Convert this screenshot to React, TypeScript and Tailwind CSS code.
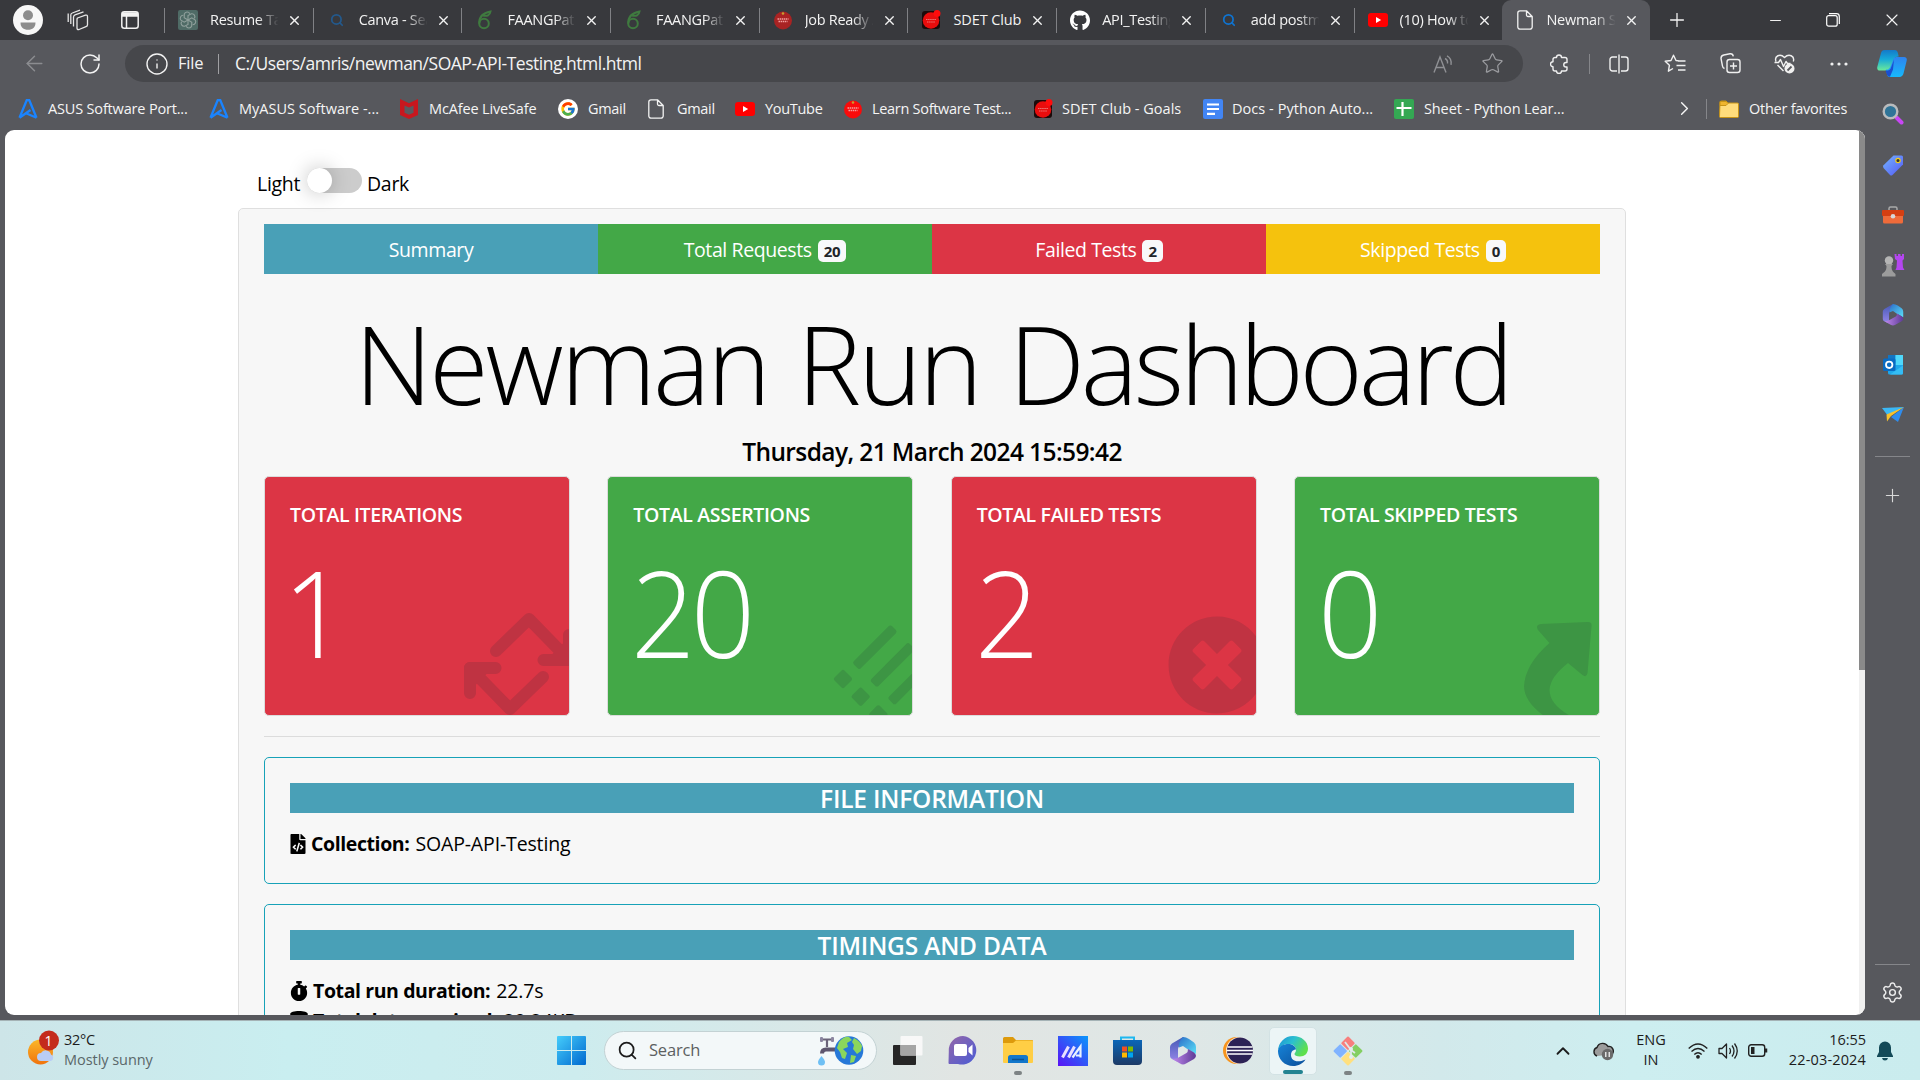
import React from "react";
import {
  FaFileCode, FaStopwatch, FaDatabase, FaGithub, FaTimesCircle,
} from "react-icons/fa";
import { FcGoogle } from "react-icons/fc";
import { Search, Star, X, Plus, Minus, ChevronRight, ChevronUp, Settings, Info, RotateCw, ArrowLeft } from "lucide-react";

type Kind = string;

function Glyph({ kind }: { kind: Kind }) {
  switch (kind) {
    case "gpt":
      return (
        <svg viewBox="0 0 20 20" className="h-5 w-5">
          <rect width="20" height="20" rx="2" fill="#4f6b66" />
          <g fill="none" stroke="#90a09c" strokeWidth="1.1">
            {[0, 60, 120, 180, 240, 300].map((a) => (
              <path key={a} transform={`rotate(${a} 10 10)`} d="M10 10V5.6L13.4 3.8a3 3 0 0 1 3 4.6" />
            ))}
          </g>
        </svg>
      );
    case "search-dim":
      return <Search className="h-[14px] w-[14px] text-[#23598c]" strokeWidth={3} />;
    case "search":
      return <Search className="h-[14px] w-[14px] text-[#0f74d1]" strokeWidth={3} />;
    case "leaf":
      return (
        <svg viewBox="0 0 20 20" className="h-5 w-5" fill="none" stroke="#3f7a3f" strokeWidth="2">
          <circle cx="9" cy="13.500" r="4.800" />
          <path d="M4.300 13.500C4 8 7 3 15.500 1.500 15 5.500 12 6.500 8 5.500" />
        </svg>
      );
    case "job":
    case "learn":
      return (
        <svg viewBox="0 0 20 20" className="h-5 w-5">
          <circle cx="10" cy="10.500" r="9" fill={kind === "job" ? "#a92323" : "#f90b0b"} />
          <circle cx="10" cy="3.500" r="1.300" fill="#c7a030" />
          <path d="M4.500 9h11M5.500 11.500h9" stroke="#f4a0a0" strokeWidth="1.300" strokeDasharray="1.500 .6" />
        </svg>
      );
    case "sdet":
      return (
        <svg viewBox="0 0 20 20" className="h-5 w-5">
          <rect x="1" y="1" width="18" height="18" rx="3" fill="#1b0b0b" />
          <circle cx="10" cy="10.500" r="8.300" fill="#e80d0d" />
          <circle cx="16" cy="3.500" r="3.500" fill="#ff0c0c" />
          <path d="M5 9.500h10M6 12h8" stroke="#ec7676" strokeWidth="1.100" strokeDasharray="1.500 .6" />
        </svg>
      );
    case "github":
      return <FaGithub className="h-[21px] w-[21px] text-white" />;
    case "yt":
      return (
        <svg viewBox="0 0 20 14" className="h-[14px] w-5">
          <rect width="20" height="14" rx="3" fill="#f00" />
          <path d="M8 4v6l5.200-3z" fill="#fff" />
        </svg>
      );
    case "file":
      return (
        <svg viewBox="0 0 16 20" className="h-5 w-4" fill="none" stroke="#f2f2f2" strokeWidth="1.300" strokeLinejoin="round">
          <path d="M3 .8h6.500L15.200 6.500V17a2.200 2.200 0 0 1-2.200 2.200H3A2.200 2.200 0 0 1 .8 17V3A2.200 2.200 0 0 1 3 .8zM9.500.8V5A1.500 1.500 0 0 0 11 6.500h4.200" />
        </svg>
      );
    case "asus":
      return (
        <svg viewBox="0 0 20 20" className="h-5 w-5" fill="none" stroke="#1a84ff" strokeWidth="2.300" strokeLinejoin="round">
          <path d="M1.500 18.800L8.800 1h2.400l7.300 17.800M1.500 18.800L12.500 11M18.500 18.800L8 14.300" />
        </svg>
      );
    case "mcafee":
      return (
        <svg viewBox="0 0 18 20" className="h-5 w-[18px]">
          <path d="M0 0l9 4.300L18 0v16l-9 4-9-4z" fill="#c8171e" />
          <path d="M4.500 6.500L9 8.500l4.500-2v7.200L9 15.700l-4.500-2z" fill="#5a5b60" />
        </svg>
      );
    case "google":
      return (
        <span className="flex h-5 w-5 items-center justify-center rounded-full bg-white">
          <FcGoogle className="h-4 w-4" />
        </span>
      );
    case "docs":
      return (
        <svg viewBox="0 0 20 20" className="h-5 w-5">
          <rect width="20" height="20" rx="2" fill="#4285f4" />
          <path d="M4 5.500h12M4 10h12M4 14.800h8" stroke="#fff" strokeWidth="2.200" />
        </svg>
      );
    case "sheet":
      return (
        <svg viewBox="0 0 20 20" className="h-5 w-5">
          <rect width="20" height="20" rx="2" fill="#34a853" />
          <path d="M2.500 9h15M8.500 3v14" stroke="#fff" strokeWidth="2.200" />
        </svg>
      );
    default:
      return (
        <svg viewBox="0 0 20 18" className="h-[18px] w-5">
          <path d="M1 2.500A1.500 1.500 0 0 1 2.500 1H7l2 2h9.500A1 1 0 0 1 19.500 4v12.500a1 1 0 0 1-1 1h-17a1 1 0 0 1-1-1z" fill="#ffdc7c" stroke="#c89416" />
          <path d="M1 1.500h6.300l1.700 2-2 2H1z" fill="#f0b52e" stroke="#c89416" />
        </svg>
      );
  }
}

const tabs: { icon: Kind; title: string }[] = [
  { icon: "gpt", title: "Resume Tailor" },
  { icon: "search-dim", title: "Canva - Search" },
  { icon: "leaf", title: "FAANGPath" },
  { icon: "leaf", title: "FAANGPath" },
  { icon: "job", title: "Job Ready A" },
  { icon: "sdet", title: "SDET Club" },
  { icon: "github", title: "API_Testing" },
  { icon: "search", title: "add postman" },
  { icon: "yt", title: "(10) How to" },
];

function TabBody({ icon, title }: { icon: Kind; title: string }) {
  return (
    <>
      <span className="flex w-5 justify-center"><Glyph kind={icon} /></span>
      <span className={title === "SDET Club" ? "ml-3 w-[70px] whitespace-nowrap tracking-[-0.100px]" : "ml-3 w-[70px] overflow-hidden whitespace-nowrap [mask-image:linear-gradient(to_right,#000_68%,transparent_98%)]"}>{title}</span>
      <X className="ml-[7px] h-[15px] w-[15px]" strokeWidth={2.2} />
    </>
  );
}

function TabStrip() {
  return (
    <div className="flex h-10 items-center bg-[#38393d] text-[14.500px] tracking-[-0.300px] text-[#f3f3f3]">
      <div className="flex w-[164px] items-center">
        <svg viewBox="0 0 30 30" className="ml-[13px] h-[30px] w-[30px]">
          <circle cx="15" cy="15" r="15" fill="#f7f7f7" />
          <circle cx="15" cy="10.300" r="5" fill="#8c8c8c" />
          <path d="M7.500 17.500h15c0 5-3 7.300-7.500 7.300s-7.500-2.300-7.500-7.300z" fill="#8c8c8c" />
        </svg>
        <svg viewBox="0 0 22 22" className="ml-6 h-[22px] w-[22px]" fill="none" stroke="#e6e6e6" strokeWidth="1.300" strokeLinejoin="round">
          <path d="M10.500 9l8-2.800q2-.5 2 1.500v8q0 1.500-1.500 2L12 20.500q-2 .5-2-1.500V10.500q0-1 .5-1.500zM6.500 17.500V8q0-1.500 1.500-2.200l8.500-3M3.800 15V6q0-1.500 1.500-2L13 1.200M1.200 13V4.500" />
        </svg>
        <svg viewBox="0 0 18 18" className="ml-8 h-[18px] w-[18px]" fill="none" stroke="#f2f2f2" strokeWidth="1.500">
          <rect x=".8" y=".8" width="16.400" height="16.400" rx="2.500" />
          <path d="M1 3.500h16" strokeWidth="4.500" />
          <path d="M5.500 5v12" />
        </svg>
      </div>
      {tabs.map((t, i) => (
        <div key={i} className={i === 8 ? "flex h-[25px] w-[148px] items-center border-l border-[#808185] pl-[13px]" : "flex h-[25px] w-[148.700px] items-center border-l border-[#808185] pl-[13px]"}>
          <TabBody {...t} />
        </div>
      ))}
      <div className="flex h-10 w-[148px] items-center rounded-t-[9px] bg-[#57585d] pl-[13px]">
        <TabBody icon="file" title="Newman Summary" />
      </div>
      <Plus className="ml-[16px] h-[22px] w-[22px]" strokeWidth={1.400} />
      <Minus className="ml-[79px] h-[17px] w-[17px]" strokeWidth={1.400} />
      <svg viewBox="0 0 14 14" className="ml-[42px] h-[14px] w-[14px]" fill="none" stroke="#fff" strokeWidth="1.200">
        <rect x=".7" y="2.700" width="10.500" height="10.500" rx="2" />
        <path d="M3 .7h7.500a2.800 2.800 0 0 1 2.800 2.800V11" />
      </svg>
      <X className="ml-[42px] h-5 w-5" strokeWidth={1.400} />
    </div>
  );
}

function AddressBar() {
  return (
    <div className="flex h-12 items-center pb-px text-[#f3f3f3]">
      <ArrowLeft className="ml-[22px] h-[25px] w-[25px] text-[#8b8c90]" strokeWidth={1.400} />
      <RotateCw className="ml-[31px] h-6 w-6" strokeWidth={1.500} />
      <div className="ml-[23px] flex h-[37px] w-[1398px] items-center rounded-full bg-[#46474b]">
        <Info className="ml-[20px] h-6 w-6" strokeWidth={1.400} />
        <span className="ml-[9px] w-[40px] text-[16.500px] tracking-[-0.200px]">File</span>
        <span className="h-5 w-px bg-[#a0a0a3]" />
        <span className="ml-4 whitespace-nowrap text-[17.500px] tracking-[-0.490px]">C:/Users/amris/newman/SOAP-API-Testing.html.html</span>
        <svg viewBox="0 0 20 18" className="ml-auto h-[18px] w-5" fill="none" stroke="#8f9094" strokeWidth="1.400">
          <path d="M1 17.500L7 2l6 15.500M3 12.500h8M12 3.500q3 1.500 2.500 5M14 .8q5 2.500 4 9" />
        </svg>
        <Star className="ml-7 mr-[19px] h-[23px] w-[23px] text-[#9b9ca0]" strokeWidth={1.300} />
      </div>
      <svg viewBox="0 0 20 20" className="ml-[27px] h-[20px] w-[20px]" fill="none" stroke="#f0f0f0" strokeWidth="1.400" strokeLinejoin="round">
        <path d="M6.500 3.500a2.500 2.500 0 0 1 5 0H15a2 2 0 0 1 2 2V8.500h-1a2.200 2.200 0 0 0 0 4.500h1v2a2 2 0 0 1-2 2h-3.500a2.500 2.500 0 0 1-5 0H5a2 2 0 0 1-2-2v-2.300a2.500 2.500 0 0 1 0-5V5.500a2 2 0 0 1 2-2z" />
      </svg>
      <span className="ml-[19px] h-5 w-px bg-[#85868a]" />
      <svg viewBox="0 0 20 20" className="ml-[19px] h-5 w-5" fill="none" stroke="#f0f0f0" strokeWidth="1.400">
        <path d="M8 3H3.500A2.500 2.500 0 0 0 1 5.500v9A2.500 2.500 0 0 0 3.500 17H8M12 3h4.500A2.500 2.500 0 0 1 19 5.500v9a2.500 2.500 0 0 1-2.500 2.500H12M10 .5v19" />
      </svg>
      <svg viewBox="0 0 22 20" className="ml-[35px] h-5 w-[22px]" fill="none" stroke="#f0f0f0" strokeWidth="1.400" strokeLinejoin="round">
        <path d="M14.500 6.800L12 6.500 9.500 1.200 7 6.500l-5.800.8 4.200 4-1 5.900L9 14.500M14 7h7.500M12.500 11.500h9M14 16h7.500" />
      </svg>
      <svg viewBox="0 0 21 21" className="ml-[34px] h-[21px] w-[21px]" fill="none" stroke="#f0f0f0" strokeWidth="1.400">
        <rect x="7" y="6.500" width="13" height="13" rx="2.500" />
        <path d="M13.500 9.500v7M10 13h7M4.500 15.500A3 3 0 0 1 2.500 13L1 5.500A3.500 3.500 0 0 1 3.800 2L10 .8a3 3 0 0 1 3.300 2.500" />
      </svg>
      <svg viewBox="0 0 21 21" className="ml-[33px] h-[21px] w-[21px]" fill="none" stroke="#f0f0f0" strokeWidth="1.400" strokeLinejoin="round">
        <path d="M2 8.500C0 3 6 0 10.500 4.500 15 0 21 3 19.300 8.500M3.500 12l6 6M.5 9.500h4l2-3 3 7 2.500-5 1.500 2h3" />
        <circle cx="15.500" cy="15.500" r="5" fill="#f0f0f0" stroke="none" />
        <path d="M13.500 17.500l4-4" stroke="#57585d" strokeWidth="1.800" />
      </svg>
      <svg viewBox="0 0 18 4" className="ml-[35px] h-1 w-[18px]" fill="#f0f0f0">
        <circle cx="2" cy="2" r="1.600" /><circle cx="9" cy="2" r="1.600" /><circle cx="16" cy="2" r="1.600" />
      </svg>
      <svg viewBox="0 0 30 27" className="ml-[29px] h-[27px] w-[30px]">
        <defs>
          <linearGradient id="cpa" x1="0" y1="0" x2="0" y2="1"><stop offset="0" stopColor="#1479c9" /><stop offset=".45" stopColor="#16a9d8" /><stop offset="1" stopColor="#6bea9a" /></linearGradient>
          <linearGradient id="cpb" x1="0" y1="0" x2="0" y2="1"><stop offset="0" stopColor="#2e83f0" /><stop offset="1" stopColor="#17b9fb" /></linearGradient>
        </defs>
        <path d="M7.500 0h10c2 0 3 1 3.400 3l.8 3.500c-2.700 0-4 1-4.700 3L13.500 18c-.7 1.600-1.500 2.500-3 2.500H3c-2.300 0-3.300-1.500-2.600-4L4 3c.6-2 1.500-3 3.500-3z" fill="url(#cpa)" />
        <path d="M9 19.500h2l2-2 3.500-8.500C17.300 7.500 18.600 7 20 7h7c2.300 0 3.300 1.500 2.600 4L26.500 23.500c-.7 2.200-2 3.500-4 3.500H13c-2 0-2.700-1-3-3z" fill="url(#cpb)" />
        <path d="M8.500 20.500h2.500q2-.3 2.700-2L17 9.500l-1 10-3 7.300c-2-.3-3-1.300-3.300-2.800z" fill="#1a4fd0" />
      </svg>
    </div>
  );
}

function Favorites() {
  const item = "flex shrink-0 items-center whitespace-nowrap";
  return (
    <div className="flex h-[42px] w-[1870px] items-center pb-px pl-[18px] text-[14.500px] tracking-[-0.300px] text-[#f5f5f5]">
      <div className={item + " w-[191px] gap-[10px]"}><Glyph kind="asus" /><span className="tracking-[-0.170px]">ASUS Software Port...</span></div>
      <div className={item + " w-[191px] gap-[10px]"}><Glyph kind="asus" /><span className="tracking-[0.020px]">MyASUS Software -...</span></div>
      <div className={item + " w-[158px] gap-[11px]"}><Glyph kind="mcafee" /><span className="tracking-[-0.150px]">McAfee LiveSafe</span></div>
      <div className={item + " w-[90px] gap-[10px]"}><Glyph kind="google" /><span>Gmail</span></div>
      <div className={item + " w-[87px] gap-[13px]"}><Glyph kind="file" /><span>Gmail</span></div>
      <div className={item + " w-[108px] gap-[10px]"}><Glyph kind="yt" /><span>YouTube</span></div>
      <div className={item + " w-[190px] gap-[9px]"}><Glyph kind="learn" /><span>Learn Software Test...</span></div>
      <div className={item + " w-[170px] gap-[9px]"}><Glyph kind="sdet" /><span className="tracking-[0.020px]">SDET Club - Goals</span></div>
      <div className={item + " w-[191px] gap-[9px]"}><Glyph kind="docs" /><span className="tracking-[0.050px]">Docs - Python Auto...</span></div>
      <div className={item + " w-[279px] gap-[10px]"}><Glyph kind="sheet" /><span className="tracking-[-0.120px]">Sheet - Python Lear...</span></div>
      <ChevronRight className="h-[23px] w-[23px]" strokeWidth={1.500} />
      <span className="ml-[10px] h-5 w-px bg-[#85868a]" />
      <div className={item + " ml-[12px] gap-[10px]"}><Glyph kind="folder" /><span className="tracking-[-0.250px]">Other favorites</span></div>
    </div>
  );
}

function SideRail() {
  const cell = "flex h-[50px] shrink-0 items-center justify-center";
  return (
    <aside className="flex w-[55px] flex-col">
      <div className="-mt-[42px] flex h-[52px] shrink-0 items-center justify-center">
        <svg viewBox="0 0 22 22" className="h-[22px] w-[22px]">
          <path d="M14.500 14.500l5 5" stroke="#c846f5" strokeWidth="4" strokeLinecap="round" />
          <circle cx="8.500" cy="8.500" r="6.800" fill="#2f7498" stroke="#b9bbbd" strokeWidth="2.400" />
        </svg>
      </div>
      <div className={cell}>
        <svg viewBox="0 0 22 22" className="h-[22px] w-[22px]">
          <defs><linearGradient id="tag" x1="0" y1="0" x2="1" y2="1"><stop stopColor="#74b5ff" /><stop offset="1" stopColor="#5458f5" /></linearGradient></defs>
          <path d="M11.500 1.500h8a1.500 1.500 0 0 1 1.500 1.500v7.500L10.500 21q-1.500 1-2.500 0L1.500 14q-1-1.500 0-2.700z" fill="url(#tag)" />
          <circle cx="16" cy="6.500" r="2.200" fill="#333" stroke="#f2cc22" strokeWidth="1.200" />
        </svg>
      </div>
      <div className={cell}>
        <svg viewBox="0 0 24 20" className="h-5 w-6">
          <path d="M8 5V3.500A1.500 1.500 0 0 1 9.500 2h5A1.500 1.500 0 0 1 16 3.500V5" fill="none" stroke="#a9a9a9" strokeWidth="1.500" />
          <rect x="1" y="5" width="22" height="6" rx="1" fill="#d53f12" />
          <path d="M2 11h20v6a1.500 1.500 0 0 1-1.500 1.500h-17A1.500 1.500 0 0 1 2 17z" fill="#ef6b3a" />
          <circle cx="12" cy="11.300" r="2.300" fill="#d8d8d8" />
        </svg>
      </div>
      <div className={cell}>
        <svg viewBox="0 0 24 24" className="h-6 w-6">
          <path d="M13.500 1h2v2h1.500V1h2.500v2H21V1h2v5l-1.500 1.500.5 7 1.500 2.500h-9l1-2.500.5-7L14 6z" fill="#b446f0" />
          <circle cx="8" cy="7.500" r="4.200" fill="#b5b5b5" />
          <path d="M4 11h8l-1.500 2c0 4 1 5.500 4 8v2.500H1V21c3.500-2.500 4.500-4 4.500-8z" fill="#9c9c9c" />
        </svg>
      </div>
      <div className={cell}><M365 size="h-[22px] w-[22px]" /></div>
      <div className={cell}>
        <svg viewBox="0 0 20 20" className="h-5 w-5">
          <rect x="5" y="0" width="15" height="19.500" rx="1.500" fill="#1fa8ea" />
          <rect x="5" y="0" width="7.500" height="8" fill="#1276c4" /><rect x="12.500" y="0" width="7.500" height="10" fill="#4fd8fb" />
          <path d="M7 19.500l13-9v7.500a1.500 1.500 0 0 1-1.500 1.500z" fill="#34bdf5" />
          <rect x="0" y="3.500" width="12.500" height="12.500" rx="1.500" fill="#0a6bc2" />
          <circle cx="6.200" cy="9.800" r="3.200" fill="none" stroke="#fff" strokeWidth="1.800" />
        </svg>
      </div>
      <div className={cell}>
        <svg viewBox="0 0 22 18" className="h-[18px] w-[22px]">
          <path d="M0 2L22 1 6 10z" fill="#3bb8f5" /><path d="M22 1L9 11l7 5z" fill="#2f8dee" />
          <path d="M22 1L4.500 8.500 5 15.500 9 10z" fill="#f9c22b" />
        </svg>
      </div>
      <span className="mx-[10px] mt-[16px] h-px shrink-0 bg-[#85868a]" />
      <div className="flex h-[76px] items-center justify-center"><Plus className="h-[21px] w-[21px] text-[#d9d9d9]" strokeWidth={1.300} /></div>
      <span className="mx-[10px] mt-auto h-px shrink-0 bg-[#85868a]" />
      <div className="flex h-[55px] shrink-0 items-center justify-center"><Settings className="h-[23px] w-[23px] text-[#ececec]" strokeWidth={1.500} /></div>
    </aside>
  );
}

function M365({ size }: { size: string }) {
  return (
    <svg viewBox="0 0 26 28" className={size}>
      <defs>
        <linearGradient id="ma" x1="0" y1="0" x2="0" y2="1"><stop stopColor="#4559b5" /><stop offset="1" stopColor="#9486e8" /></linearGradient>
        <linearGradient id="mb" x1="0" y1="0" x2="1" y2="1"><stop stopColor="#2b6fc9" /><stop offset="1" stopColor="#5ce0f8" /></linearGradient>
        <linearGradient id="mc" x1="0" y1="0" x2="1" y2="0"><stop stopColor="#c48cf0" /><stop offset="1" stopColor="#5d3a96" /></linearGradient>
      </defs>
      <path fillRule="evenodd" d="M13 0L2 6.500Q0 8 0 10v9q0 2 2 3l5 2.500q1-.5 1-3V12q0-2 2-3.500L16 3z" fill="url(#ma)" />
      <path d="M13 0q3 0 6 2l5 3.500q2 1.500 2 4.500v7l-8-4.500-5-3.500-4 1.500q-1-6 4-10.500z" fill="url(#mb)" />
      <path d="M1.500 21.500q4 1 7-1l8-4.500q1.500-1 1.500-4l6 3.500q2 1.500 2 3.500-.5 2-2 3l-8 4.500q-3 2-6 0z" fill="url(#mc)" />
    </svg>
  );
}

const watermark = "pointer-events-none absolute -top-px -left-px h-[240px] w-[306px]";

function Watermark({ kind }: { kind: string }) {
  if (kind === "loop")
    return (
      <svg viewBox="264 476 306 240" className={watermark} opacity=".15">
        {[0, 180].map((a) => (
          <g key={a} transform={`rotate(${a} 519.500 664)`} fill="none" stroke="#1f2937" strokeWidth="12" strokeLinecap="round" strokeLinejoin="round">
            <path d="M495.500 668H470v25M470 668L510 709 543 677" />
            <path d="M470 668h14l-14 14z" fill="#1f2937" />
          </g>
        ))}
      </svg>
    );
  if (kind === "list")
    return (
      <svg viewBox="608 476 306 240" className={watermark} opacity=".15">
        <g transform="translate(844 679) rotate(-45)" fill="#1f2937">
          {[0, 25, 50].map((y) => (
            <g key={y}>
              <rect x="-7" y={y - 7} width="14" height="14" rx="2" />
              <rect x="18" y={y - 5} width="54" height="10" rx="2.500" />
            </g>
          ))}
        </g>
      </svg>
    );
  if (kind === "times")
    return <FaTimesCircle className="absolute top-[138px] left-[215px] h-[100px] w-[100px] text-[#1f2937]/15" />;
  return (
    <svg viewBox="1294 476 306 240" className={watermark} opacity=".15">
      <path d="M1541 624l47-2q4 0 3.500 4l-4 47q-1 5-5 2L1568 663q-18 14-18.500 27 0 14 20 25.500h-26q-19-14-19.500-29 1-22 25.500-43.500L1538 630q-3-5 3-6z" fill="#1f2937" />
    </svg>
  );
}

function StatCard({ title, value, color, mark }: { title: string; value: string; color: string; mark: string }) {
  return (
    <div className={"relative h-[240px] w-[306px] overflow-hidden rounded-[5px] border border-[#dcdcdc] text-white " + color}>
      <Watermark kind={mark} />
      <div className="mt-[23px] ml-[25px] text-[19.500px] leading-[30px] font-semibold tracking-[-0.330px] whitespace-nowrap">{title}</div>
      <div className={value === "1" ? "mt-[10px] ml-[18px] origin-left scale-x-[0.94] text-[120px] leading-[144px] font-light tracking-[-5px]" : "mt-[10px] ml-[23px] origin-left scale-x-[0.94] text-[120px] leading-[144px] font-light tracking-[-5px]"}>{value}</div>
    </div>
  );
}

function NavItem({ label, count, color }: { label: string; count?: string; color: string }) {
  return (
    <div className={"flex h-[50px] flex-1 items-center justify-center gap-[6px] text-[19.500px] tracking-[-0.400px] text-white " + color}>
      <span className="pt-px">{label}</span>
      {count && <span className="mt-[4px] flex h-[22px] items-center rounded-[5px] bg-[#f8f9fa] px-[6px] text-[15px] font-bold tracking-[-0.300px] text-[#212529]">{count}</span>}
    </div>
  );
}

function InfoCard({ title, height, children }: { title: string; height: string; children: React.ReactNode }) {
  return (
    <section className={"rounded-[5px] border border-[#17a2b8] px-[25px] pt-[25px] " + height}>
      <h5 className="flex h-[30px] items-center justify-center bg-[#49a0b7] pt-[2px] text-[24.500px] font-semibold tracking-[-0.200px] text-white">{title}</h5>
      <div className="mt-[16px]">{children}</div>
    </section>
  );
}

function InfoRow({ icon, label, value }: { icon: React.ReactNode; label: string; value: string }) {
  return (
    <div className="flex h-[30px] items-center text-[19.500px] tracking-[-0.150px] whitespace-nowrap text-black">
      {icon}
      <span className="ml-[5px] font-bold tracking-[-0.400px]">{label}</span>
      <span className="ml-[6px]">{value}</span>
    </div>
  );
}

function Report() {
  return (
    <main className="flex h-[885px] w-[1860px] overflow-hidden rounded-[9px] bg-white">
      <div className="w-[1854px] pl-[233px]">
        <div className="flex h-[78px] items-start pt-[38px] pl-[19px] text-[19.500px] leading-[32px] tracking-[-0.300px] text-black">
          <span className="w-[50px]">Light</span>
          <span className="flex h-[25px] w-[55px] rounded-full bg-[#ccc]"><span className="h-[25px] w-[25px] rounded-full bg-white shadow-[0_0_20px_rgba(0,0,0,0.25)]" /></span>
          <span className="ml-[5px]">Dark</span>
        </div>
        <div className="h-[900px] w-[1388px] rounded-[5px] border border-[#dfdfdf] bg-[#f7f7f7] px-[25px] pt-[15px]">
          <nav className="flex">
            <NavItem label="Summary" color="bg-[#49a0b7]" />
            <NavItem label="Total Requests" count="20" color="bg-[#43a847]" />
            <NavItem label="Failed Tests" count="2" color="bg-[#dc3545]" />
            <NavItem label="Skipped Tests" count="0" color="bg-[#f5c20d]" />
          </nav>
          <h1 className="mt-[21px] flex h-[140px] items-center justify-center gap-[29px] pb-[2px] text-[108px] leading-none font-light tracking-[-3px] whitespace-nowrap text-black">
            <span>Newman</span><span>Run</span><span className="tracking-[-4.200px]">Dashboard</span>
          </h1>
          <h5 className="flex h-[35px] items-center justify-center text-[24.500px] font-semibold tracking-[-0.600px] text-black">Thursday, 21 March 2024 15:59:42</h5>
          <div className="mt-[6px] flex justify-between">
            <StatCard title="TOTAL ITERATIONS" value="1" color="bg-[#dc3545]" mark="loop" />
            <StatCard title="TOTAL ASSERTIONS" value="20" color="bg-[#43a847]" mark="list" />
            <StatCard title="TOTAL FAILED TESTS" value="2" color="bg-[#dc3545]" mark="times" />
            <StatCard title="TOTAL SKIPPED TESTS" value="0" color="bg-[#43a847]" mark="skip" />
          </div>
          <hr className="mt-5 mb-5 border-[#dcdcdc]" />
          <InfoCard title="FILE INFORMATION" height="h-[127px]">
            <InfoRow icon={<FaFileCode className="h-5 w-[16px]" />} label="Collection:" value="SOAP-API-Testing" />
          </InfoCard>
          <div className="h-5" />
          <InfoCard title="TIMINGS AND DATA" height="h-[200px]">
            <InfoRow icon={<FaStopwatch className="h-5 w-[18px]" />} label="Total run duration:" value="22.7s" />
            <InfoRow icon={<FaDatabase className="h-5 w-[18px]" />} label="Total data received:" value="20.24KB" />
          </InfoCard>
        </div>
      </div>
      <div className="w-[6px] bg-[#f0f0f0]"><div className="h-[540px] bg-[#8a8a8a]" /></div>
    </main>
  );
}

function Taskbar() {
  const slot = "relative flex h-12 w-[55px] shrink-0 items-center justify-center";
  const dot = "absolute bottom-0 h-1 w-2 rounded-full bg-[#7d8384]";
  return (
    <footer className="flex h-[60px] items-center border-t border-[#a5b3b6] bg-[linear-gradient(90deg,#cde5e8_0%,#c9eef0_15%,#cdecee_30%,#e1e5e3_50%,#dfe7e6_62%,#d2e9eb_75%,#cdeef0_85%,#caecee_100%)] text-[#1c1c1c]">
      <div className="flex w-[557px] items-center pl-[27px]">
        <svg viewBox="0 0 32 36" className="mb-[5px] h-9 w-8">
          <defs><linearGradient id="sun" x1="0" y1="0" x2="0" y2="1"><stop stopColor="#fbb829" /><stop offset="1" stopColor="#f0730c" /></linearGradient></defs>
          <circle cx="13.500" cy="22" r="12.500" fill="url(#sun)" />
          <path d="M14 31a4 4 0 0 1 0-8 5.500 5.500 0 0 1 10 1.500 3.500 3.500 0 0 1 0 6.500z" fill="#b9cdf5" />
          <circle cx="22" cy="10.500" r="10" fill="#c42b1c" />
          <text x="21.500" y="15.500" textAnchor="middle" fontSize="14" fill="#fff" className="font-['Open_Sans']">1</text>
        </svg>
        <div className="-mt-[2px] ml-[5px] text-[14.500px] leading-5 tracking-[-0.050px]"><div className="tracking-[-0.300px]">32°C</div><div className="text-[#5a6769]">Mostly sunny</div></div>
      </div>
      <svg viewBox="0 0 29 29" className="h-[29px] w-[29px]">
        <defs><linearGradient id="win" x1="0" y1="0" x2="1" y2="1"><stop stopColor="#45cdfb" /><stop offset="1" stopColor="#0068cf" /></linearGradient></defs>
        <path d="M0 1a1 1 0 0 1 1-1h13v14H0zM15 0h13a1 1 0 0 1 1 1v13H15zM0 15h14v14H1a1 1 0 0 1-1-1zM15 15h14v13a1 1 0 0 1-1 1H15z" fill="url(#win)" />
      </svg>
      <div className="ml-[18px] flex h-[39px] w-[273px] items-center rounded-full border border-[#c3d2d4] bg-[#f3f8f9]">
        <Search className="ml-[12px] h-[21px] w-[21px]" strokeWidth={2} />
        <span className="ml-[11px] text-[16.500px] tracking-[-0.200px] text-[#5c6061]">Search</span>
        <svg viewBox="0 0 47 31" className="mr-[12px] ml-auto h-[31px] w-[47px]">
          <path d="M5 4.500h10M10 4v8" fill="none" stroke="#6b6379" strokeWidth="2.200" />
          <path d="M18 14.500H9q-4 0-4 4" fill="none" stroke="#5e566e" strokeWidth="4" />
          <rect x="3" y="2" width="3" height="5" rx="1" fill="#8c86a0" /><rect x="14" y="2" width="3" height="5" rx="1" fill="#8c86a0" />
          <path d="M4.500 21q3.500 4 3.500 6a3.500 3.500 0 0 1-7 0q0-2 3.500-6z" fill="#6fc0f4" />
          <circle cx="32" cy="15.500" r="14.300" fill="#2678d8" />
          <path d="M22 7q5-6 10-5l3 3-5 3 1 4-5 2 4 4-2 6-3-1-2-6-3-4zM37 3q6 3 8 8l-1 5-4 3-4-5 1-4-2-3zM34 20l5 1-2 6-4 1z" fill="#8bd65c" />
        </svg>
      </div>
      <div className={slot + " ml-[3px]"}>
        <svg viewBox="0 0 30 29" className="h-[29px] w-[30px]"><rect y="9" width="23" height="20" rx="1" fill="#262626" /><rect x="7.500" y="0" width="22" height="19.500" rx="1" fill="#f8f8f8" /><path d="M7.500 9H23v10.500H7.500z" fill="#a5a5a5" /></svg>
      </div>
      <div className={slot}>
        <svg viewBox="0 0 30 29" className="h-[29px] w-[30px]">
          <defs><linearGradient id="chat" x1="0" y1="0" x2="1" y2="1"><stop stopColor="#9567a8" /><stop offset="1" stopColor="#4a5cd6" /></linearGradient></defs>
          <path d="M15 0a14.300 14.300 0 1 1-5 28H1.500q-1 0-1-1l.3-12A14.300 14.300 0 0 1 15 0z" fill="url(#chat)" />
          <rect x="6" y="8" width="13" height="12" rx="2" fill="#fff" /><path d="M20.500 12l4-3.500v11l-4-3.500z" fill="#fff" />
        </svg>
      </div>
      <div className={slot}>
        <svg viewBox="0 0 30 27" className="h-[27px] w-[30px]">
          <path d="M0 1.500A1.500 1.500 0 0 1 1.500 0H10l3 3h16a1 1 0 0 1 1 1v5H0z" fill="#dd9a0c" /><path d="M0 6h10l3-2.500h16a1 1 0 0 1 1 1V25a1 1 0 0 1-1 1H1a1 1 0 0 1-1-1z" fill="#ffce45" />
          <path d="M5 26v-5.500A2.500 2.500 0 0 1 7.500 18h15a2.500 2.500 0 0 1 2.500 2.500V26z" fill="#1277cb" /><path d="M9 22.500h12" stroke="#0b5290" strokeWidth="1.500" />
        </svg>
        <span className={dot} />
      </div>
      <div className={slot}>
        <svg viewBox="0 0 30 30" className="h-[30px] w-[30px]">
          <defs><linearGradient id="my" x1="0" y1="1" x2="1" y2="0"><stop stopColor="#5a12f5" /><stop offset="1" stopColor="#0a97fb" /></linearGradient></defs>
          <rect width="30" height="30" fill="url(#my)" />
          <path d="M4.500 21.500l6-11M10.500 21.500l6-11" stroke="#e8e0ff" strokeWidth="3" /><path d="M14.500 21.500l8-11v11M18 19.500h4" fill="none" stroke="#e8f2ff" strokeWidth="2.200" />
        </svg>
      </div>
      <div className={slot}>
        <svg viewBox="0 0 29 29" className="h-[29px] w-[29px]">
          <defs><linearGradient id="st" x1="0" y1="0" x2="0" y2="1"><stop stopColor="#0a66b8" /><stop offset="1" stopColor="#1d3a66" /></linearGradient></defs>
          <path d="M8 5V1.500h13V5" fill="none" stroke="#1fb8f0" strokeWidth="2" />
          <path d="M0 4h29v21a4 4 0 0 1-4 4H4a4 4 0 0 1-4-4z" fill="url(#st)" />
          <rect x="9" y="10.500" width="5" height="5" fill="#f25022" /><rect x="15" y="10.500" width="5" height="5" fill="#7fba00" /><rect x="9" y="16.500" width="5" height="5" fill="#ffb900" /><rect x="15" y="16.500" width="5" height="5" fill="#00a4ef" />
        </svg>
      </div>
      <div className={slot}><M365 size="h-[28px] w-[26px]" /></div>
      <div className={slot}>
        <svg viewBox="0 0 30 27" className="h-[27px] w-[30px]"><circle cx="13.500" cy="13.500" r="13.500" fill="#f7941e" /><circle cx="16.500" cy="13.500" r="13.500" fill="#fff" opacity=".8" /><circle cx="17" cy="13.500" r="13" fill="#2c2255" /><path d="M4.500 10h25M4 13.500h26M4.500 17h25" stroke="#fff" strokeWidth="1.700" /></svg>
      </div>
      <div className={slot}>
        <div className="flex h-12 w-12 items-center justify-center rounded-[5px] border border-[#d3e2e4] bg-[#ecf5f6]">
          <svg viewBox="0 0 30 30" className="h-[30px] w-[30px]">
            <defs>
              <linearGradient id="ea" x1="0" y1="0" x2="1" y2=".5"><stop stopColor="#1b8fd8" /><stop offset=".5" stopColor="#2bc0cf" /><stop offset="1" stopColor="#5fe04c" /></linearGradient>
              <linearGradient id="eb" x1="0" y1="0" x2="1" y2="1"><stop stopColor="#1683d8" /><stop offset="1" stopColor="#0c4f9a" /></linearGradient>
            </defs>
            <path d="M0 15A15 15 0 0 1 15 0c8.500 0 15 5.500 15 12.500 0 5-3.500 8-8 8-3.500 0-5.500-1-5.500-2.500 0-1 1.500-1.500 1.500-4C18 10 14.500 8 10.500 8 5 8 1 11 0 15z" fill="url(#ea)" />
            <path d="M0 14.500C1 10 5.500 8 10.500 8c4 0 7.500 2.500 7.500 5.500 0 0-5 0-5 5.500s5.500 8.500 14.500 4.500C25 27.500 20.500 30 15 30A15 15 0 0 1 0 14.500z" fill="url(#eb)" />
          </svg>
        </div>
        <span className="absolute bottom-px h-1 w-5 rounded-full bg-[#238391]" />
      </div>
      <div className={slot}>
        <svg viewBox="0 0 30 30" className="h-[30px] w-[30px]">
          <g transform="rotate(45 15 15)"><rect x="4.500" y="4.500" width="10" height="10" rx="1" fill="#f77f7d" /><rect x="15.500" y="4.500" width="10" height="10" rx="1" fill="#84cf62" /><rect x="4.500" y="15.500" width="10" height="10" rx="1" fill="#80b3ff" /><rect x="15.500" y="15.500" width="10" height="10" rx="1" fill="#ffe07f" /></g>
          <path d="M12 6l6 8v8M18 14l4 3" fill="none" stroke="#dfe9ea" strokeWidth="1.800" /><circle cx="18" cy="13" r="2" fill="#e4eeee" /><circle cx="18" cy="21" r="2" fill="#e4eeee" />
        </svg>
        <span className={dot} />
      </div>
      <ChevronUp className="ml-auto h-[22px] w-[22px]" strokeWidth={2} />
      <svg viewBox="0 0 22 20" className="ml-[18px] h-5 w-[22px]">
        <path d="M5 15a4.500 4.500 0 0 1 0-8.500 6 6 0 0 1 11-1 4.500 4.500 0 0 1 3.500 8" fill="#9c9c9c" stroke="#222" strokeWidth="1.400" /><circle cx="15.500" cy="13.500" r="5.700" fill="#6b6b6b" /><path d="M13.800 11v5M17.200 11v5" stroke="#fff" strokeWidth="1.200" />
      </svg>
      <div className="-mt-px ml-[20px] w-[34px] text-center text-[14.500px] leading-5 tracking-[0px]"><div>ENG</div><div>IN</div></div>
      <svg viewBox="0 0 20 16" className="ml-[20px] h-4 w-5" fill="none" stroke="#222" strokeWidth="1.400"><path d="M.7 5.500Q10-3.500 19.300 5.500M3.500 8.500q6.500-6 13 0M6.300 11.500q3.700-3.500 7.400 0" /><circle cx="10" cy="13.800" r="1.200" fill="#222" /></svg>
      <svg viewBox="0 0 20 18" className="ml-[10px] h-[18px] w-5" fill="none" stroke="#222" strokeWidth="1.300" strokeLinejoin="round"><path d="M1 6.500h3l4.500-4.500v14L4 11.500H1zM11.500 6q2 3 0 6M14 3.500q4 5.500 0 11M16.500 1.500q5.500 7.500 0 15" /></svg>
      <svg viewBox="0 0 20 13" className="ml-[10px] h-[13px] w-5"><rect x=".7" y=".7" width="16" height="11.600" rx="2.500" fill="none" stroke="#222" strokeWidth="1.400" /><rect x="3" y="3" width="3.500" height="7" fill="#222" /><path d="M18 4.500v4" stroke="#222" strokeWidth="2.500" /></svg>
      <div className="-mt-[2px] ml-[18px] w-[80px] text-right text-[14.500px] leading-5 tracking-[0.150px] whitespace-nowrap"><div className="tracking-[-0.050px]">16:55</div><div>22-03-2024</div></div>
      <svg viewBox="0 0 18 20" className="mr-[26px] ml-[10px] h-5 w-[18px]" fill="#144a58"><path d="M9 .5A6 6 0 0 1 15 6.500V11l2 4v1H1v-1l2-4V6.500A6 6 0 0 1 9 .5zM6 17h6q-.5 2.500-3 2.500T6 17z" /></svg>
    </footer>
  );
}

export default function App() {
  return (
    <div className="flex h-[1080px] w-[1920px] flex-col overflow-hidden bg-[#57585d] font-['Open_Sans','Noto_Sans',sans-serif]">
      <TabStrip />
      <AddressBar />
      <Favorites />
      <div className="flex h-[890px] shrink-0 pl-[5px]">
        <Report />
        <SideRail />
      </div>
      <Taskbar />
    </div>
  );
}
